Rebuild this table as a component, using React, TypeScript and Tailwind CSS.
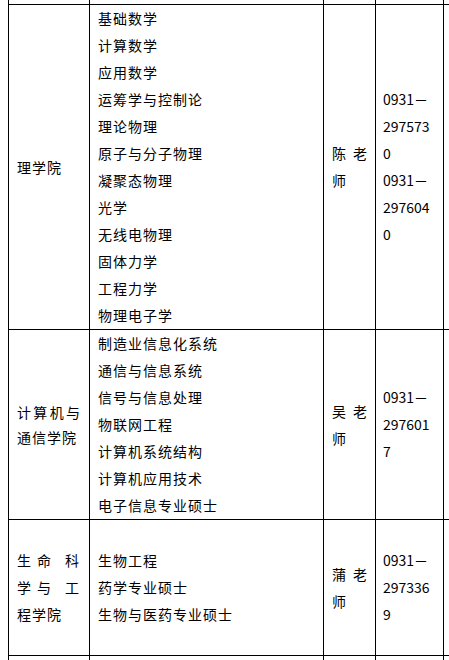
import React from "react";

interface Row {
  college: React.ReactNode;
  majors: string[];
  contact: string;
  phones: string[];
  height: string;
}

const font = { fontFamily: '"Noto Sans CJK SC", "Noto Sans", sans-serif' };

function Spread({ text }: { text: string }) {
  return (
    <div className="flex justify-between">
      {text.split("").map((c, i) => (
        <span key={i}>{c}</span>
      ))}
    </div>
  );
}

const rows: Row[] = [
  {
    college: <div className="leading-[27px]">理学院</div>,
    majors: [
      "基础数学",
      "计算数学",
      "应用数学",
      "运筹学与控制论",
      "理论物理",
      "原子与分子物理",
      "凝聚态物理",
      "光学",
      "无线电物理",
      "固体力学",
      "工程力学",
      "物理电子学",
    ],
    contact: "陈老师",
    phones: ["0931－", "297573", "0", "0931－", "297604", "0"],
    height: "h-[325px]",
  },
  {
    college: (
      <div className="leading-[25px]">
        <Spread text="计算机与" />
        <div>通信学院</div>
      </div>
    ),
    majors: [
      "制造业信息化系统",
      "通信与信息系统",
      "信号与信息处理",
      "物联网工程",
      "计算机系统结构",
      "计算机应用技术",
      "电子信息专业硕士",
    ],
    contact: "吴老师",
    phones: ["0931－", "297601", "7"],
    height: "h-[190px]",
  },
  {
    college: (
      <div className="leading-[27px]">
        <div className="flex">
          <span>生</span>
          <span className="ml-[5px]">命</span>
          <span className="ml-[13px]">科</span>
        </div>
        <div className="flex">
          <span>学</span>
          <span className="ml-[5px]">与</span>
          <span className="ml-[13px]">工</span>
        </div>
        <div>程学院</div>
      </div>
    ),
    majors: ["生物工程", "药学专业硕士", "生物与医药专业硕士"],
    contact: "蒲老师",
    phones: ["0931－", "297336", "9"],
    height: "h-[136px]",
  },
];

function StubRow({ className }: { className: string }) {
  return (
    <div className={`flex ${className}`}>
      <div className="w-[81px] shrink-0 border-l border-black" />
      <div className="w-[234px] shrink-0 border-l border-black" />
      <div className="w-[52px] shrink-0 border-l border-black" />
      <div className="w-[68px] shrink-0 border-l border-black" />
      <div className="w-[30px] shrink-0 border-l border-black" />
    </div>
  );
}

export default function App() {
  return (
    <div
      className="w-[449px] h-[660px] overflow-hidden bg-white text-black pl-[8px]"
      style={font}
    >
      <div className="w-[480px] text-[14px]">
        <StubRow className="h-[4px]" />
        {rows.map((row, idx) => (
          <div key={idx} className={`flex border-t border-black ${row.height}`}>
            <div className="w-[81px] shrink-0 border-l border-black px-[8px] flex flex-col justify-center tracking-[1px]">
              {row.college}
            </div>
            <div className="w-[234px] shrink-0 border-l border-black px-[8px] flex flex-col justify-center tracking-[1px]">
              {row.majors.map((m) => (
                <div key={m} className="leading-[27px] whitespace-nowrap">
                  {m}
                </div>
              ))}
            </div>
            <div className="w-[52px] shrink-0 border-l border-black px-[8px] flex flex-col justify-center leading-[27px]">
              <Spread text={row.contact.slice(0, 2)} />
              <div>{row.contact.slice(2)}</div>
            </div>
            <div className="w-[68px] shrink-0 border-l border-black pl-[7px] flex flex-col justify-center leading-[27px]">
              {row.phones.map((p, i) => (
                <div key={i} className="whitespace-nowrap">
                  {p}
                </div>
              ))}
            </div>
            <div className="w-[30px] shrink-0 border-l border-black" />
          </div>
        ))}
        <StubRow className="h-[20px] border-t border-black" />
      </div>
    </div>
  );
}
